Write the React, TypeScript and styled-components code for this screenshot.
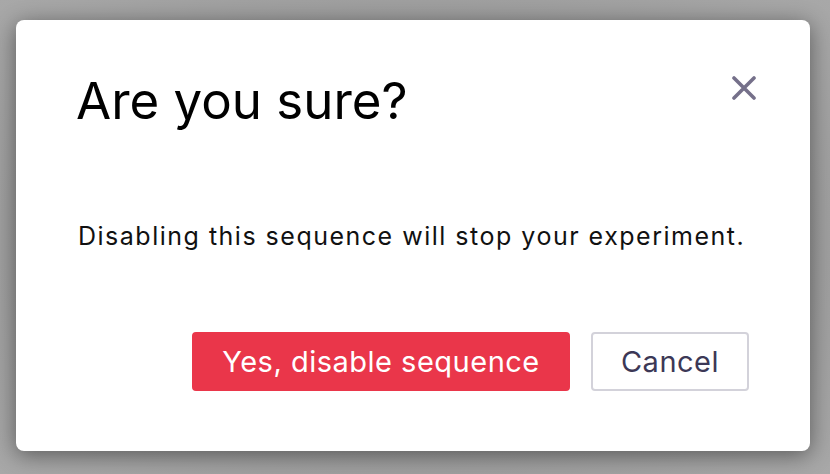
import React from 'react';
import styled, { createGlobalStyle } from 'styled-components';

const GlobalStyle = createGlobalStyle`
  html, body {
    margin: 0;
    padding: 0;
    background: #9d9d9d;
  }
  body {
    width: 830px;
    height: 474px;
    overflow: hidden;
    font-family: Inter, "Liberation Sans", Arial, sans-serif;
  }
`;

const Backdrop = styled.div`
  width: 830px;
  height: 474px;
  box-sizing: border-box;
  padding: 20px 20px 0 16px;
  background: radial-gradient(ellipse at center, #8a8a8a 0%, #a8a8a8 100%);
`;

const Modal = styled.section`
  display: flex;
  flex-direction: column;
  width: 794px;
  height: 431px;
  box-sizing: border-box;
  padding: 50px 54px 60px 62px;
  background: #fff;
  border-radius: 8px;
  box-shadow: 0 4px 22px rgba(0, 0, 0, 0.45);
`;

const Header = styled.header`
  display: flex;
  align-items: flex-start;
  justify-content: space-between;
`;

const Title = styled.h1`
  margin: 0 0 0 -2px;
  font-size: 51px;
  line-height: 62px;
  font-weight: 400;
  color: #000;
`;

const CloseButton = styled.button`
  display: flex;
  width: 24px;
  height: 24px;
  margin-top: 6px;
  padding: 0;
  border: 0;
  background: none;
  cursor: pointer;
`;

const Message = styled.p`
  margin: 89px 0 0;
  font-size: 25px;
  line-height: 30px;
  letter-spacing: 1.5px;
  color: #111;
`;

const Actions = styled.div`
  display: flex;
  justify-content: flex-end;
  gap: 21px;
  margin-top: auto;
  padding-right: 7px;
`;

const ActionButton = styled.button<{ danger?: boolean }>`
  height: 59px;
  box-sizing: border-box;
  padding: 0;
  border-radius: 4px;
  font-family: inherit;
  font-size: 29px;
  letter-spacing: 0.5px;
  cursor: pointer;
  border: 2px solid ${({ danger }) => (danger ? '#ea364a' : '#d3d2da')};
  background: ${({ danger }) => (danger ? '#ea364a' : '#fff')};
  color: ${({ danger }) => (danger ? '#fff' : '#3c3856')};
  width: ${({ danger }) => (danger ? '378px' : '158px')};
`;

const CloseIcon = () => (
  <svg width="24" height="24" viewBox="0 0 24 24">
    <path d="M2 2 L22 22 M22 2 L2 22" stroke="#75708a" strokeWidth="3.6" strokeLinecap="round" />
  </svg>
);

export default function App() {
  return (
    <>
      <GlobalStyle />
      <Backdrop>
        <Modal>
          <Header>
            <Title>Are you sure?</Title>
            <CloseButton aria-label="Close">
              <CloseIcon />
            </CloseButton>
          </Header>
          <Message>Disabling this sequence will stop your experiment.</Message>
          <Actions>
            <ActionButton danger>Yes, disable sequence</ActionButton>
            <ActionButton>Cancel</ActionButton>
          </Actions>
        </Modal>
      </Backdrop>
    </>
  );
}
